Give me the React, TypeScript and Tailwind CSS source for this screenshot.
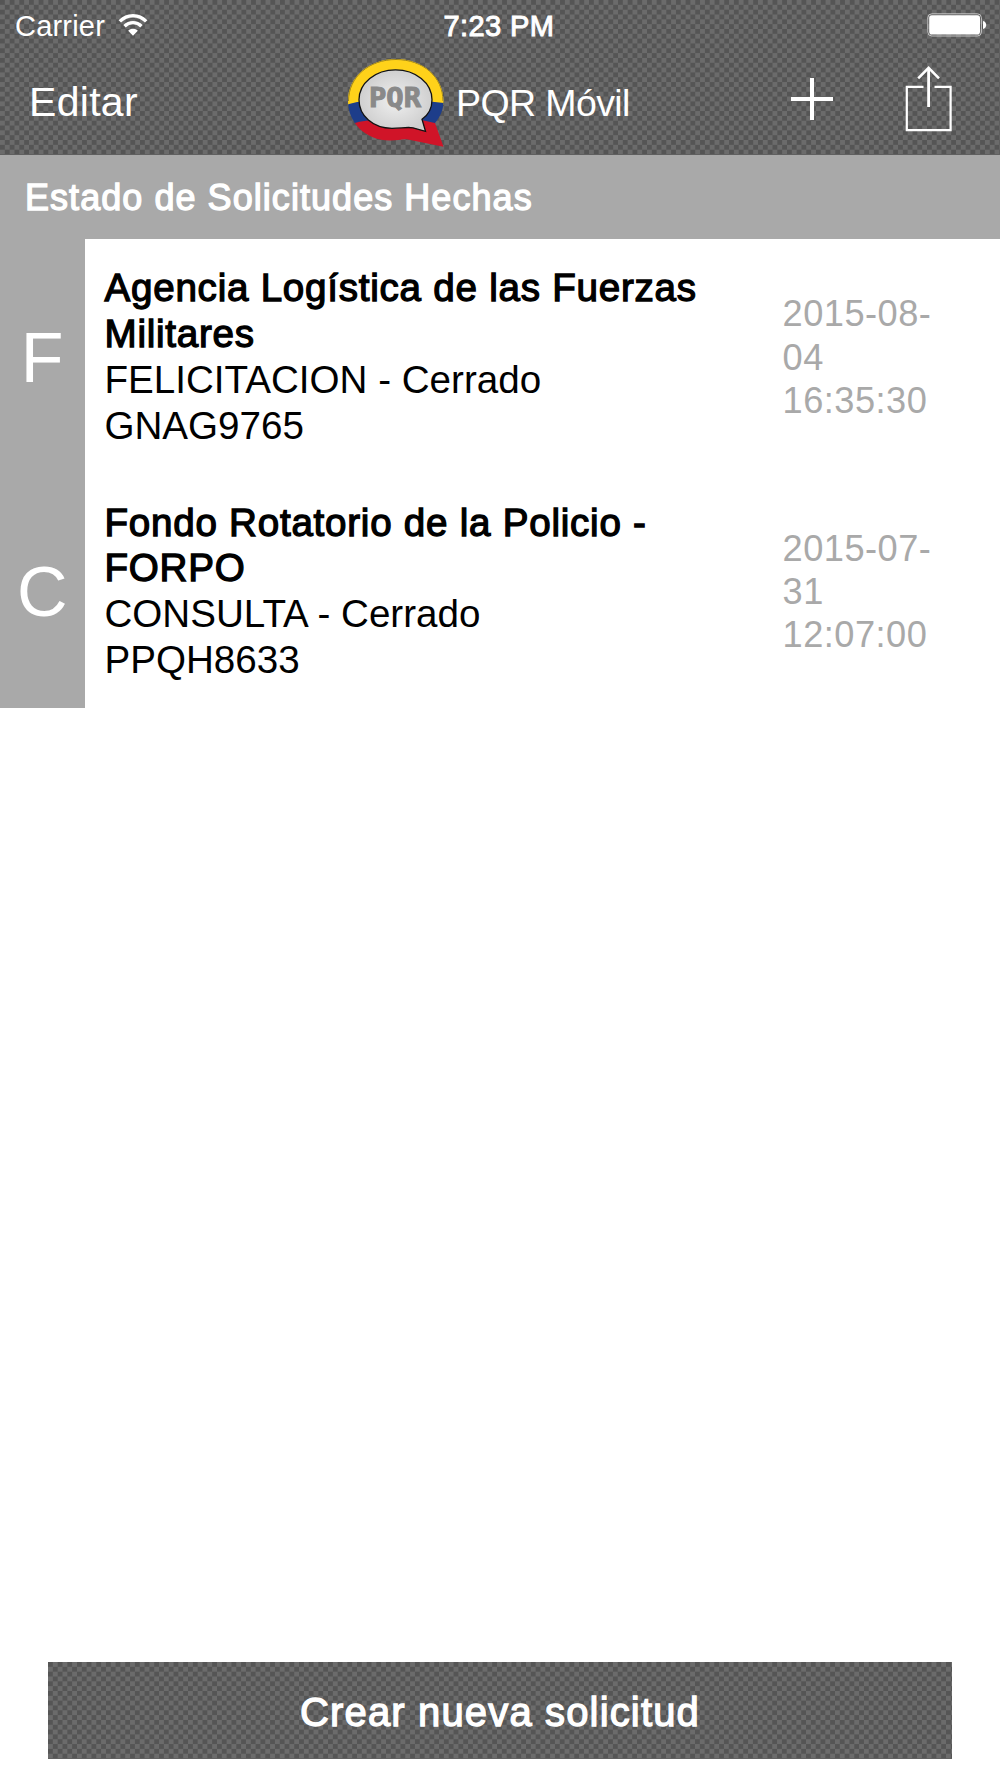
import { useState } from 'react';

type Solicitud = { id: string; entity: string; kind: string; status: string; date: string };

const solicitudes: Solicitud[] = [
  { id: 'GNAG9765', entity: 'Agencia Logística de las Fuerzas Militares', kind: 'FELICITACION', status: 'Cerrado', date: '2015-08-04 16:35:30' },
  { id: 'PPQH8633', entity: 'Fondo Rotatorio de la Policio - FORPO', kind: 'CONSULTA', status: 'Cerrado', date: '2015-07-31 12:07:00' },
];

const textureCls = 'bg-[repeating-conic-gradient(#6b6b6b_0_25%,#555555_0_50%)] bg-[length:9.66px_9.66px]';
// medium weight: regular face thickened with a stroke
const mediumCls = '[-webkit-text-stroke:1.3px_currentColor]';

function WifiIcon() {
  return (
    <svg className="h-[23px] w-[30px]" viewBox="0 0 30 23" fill="none" stroke="#fff">
      <path d="M1.8 7.4C9.2-.1 20.8-.1 28.2 7.4" strokeWidth="3.4" />
      <path d="M6.5 12.2c4.8-4.8 12.2-4.8 17 0" strokeWidth="3.4" />
      <path d="M15 21.8l-4.8-5.1c2.7-2.5 6.9-2.5 9.6 0z" fill="#fff" stroke="none" />
    </svg>
  );
}

function BatteryIcon() {
  return (
    <svg className="h-[24px] w-[60px]" viewBox="0 0 60 24">
      <rect x=".8" y=".8" width="53.6" height="22.2" rx="4" fill="none" stroke="#c4c4c4" strokeWidth="1" />
      <rect x="2.2" y="2.2" width="50.8" height="19.4" rx="2.8" fill="#fff" />
      <path d="M56 8c4.3.8 4.3 7.2 0 8z" fill="#fff" />
    </svg>
  );
}

function Logo() {
  return (
    <svg className="h-[90px] w-[98px]" viewBox="0 0 98 90">
      <defs>
        <clipPath id="bubble">
          <path d="M49 0C22 0 1 18 1 42c0 21 17 39.500 42 39.500 8 0 13-2 18-1l35.500 7.200L88 64c5-6 8.500-13 8.500-22C96.500 18 76 0 49 0z" />
        </clipPath>
        <radialGradient id="silver">
          <stop offset="0" stopColor="#f0f0f0" />
          <stop offset="1" stopColor="#cfcfcf" />
        </radialGradient>
      </defs>
      <g clipPath="url(#bubble)">
        <rect width="98" height="46" fill="#ffd21a" />
        <path d="M0 45.500q12-4 24-3h50q12 0 24 1.500V65H0z" fill="#1d3d8a" />
        <path d="M0 66q12-4 24-5h50q10 2 24 5v24H0z" fill="#d01428" />
        <path d="M1.500 42C1.500 18 22 .5 49 .5S96 18 96 42" fill="none" stroke="#9a811c" />
      </g>
      <path d="M48.500 10.800c-20 0-36.500 13-36.500 30 0 16 14 28.500 33 28.500 9 0 15-1.500 21-.5l12.500 3.500-3.500-12c6.500-4.500 10-11.500 10-19.500 0-17-16.500-30-36.500-30z" fill="url(#silver)" stroke="#111" strokeWidth="1.300" />
      <text x="22" y="47.500" textLength="52" lengthAdjust="spacingAndGlyphs" className="font-['DejaVu_Sans_Mono',monospace] text-[27px] font-bold" fill="#898989" stroke="#898989" strokeWidth="1">PQR</text>
    </svg>
  );
}

function ShareIcon() {
  return (
    <svg className="h-[66px] w-[48px]" viewBox="0 0 48 66" fill="none" stroke="#fff" strokeWidth="2.200">
      <path d="M18.500 20.800H1.800v43.400h43.800V20.800H29.500" />
      <path d="M23.600 41V2" strokeWidth="2.800" />
      <path d="M13.200 12.300L23.600 1.900l10.400 10.400" strokeWidth="2.600" />
    </svg>
  );
}

function SolicitudRow({ item }: { item: Solicitud }) {
  return (
    <li className="flex h-[234.500px] items-stretch">
      <div className="flex w-[84.500px] shrink-0 items-center justify-center bg-[#a9a9a9] text-[70px] leading-none text-white">
        <span className="pt-[3px]">{item.kind[0]}</span>
      </div>
      <div className="w-[678px] pl-5 pt-[26px] text-[38.600px] leading-[45.900px]">
        <p className={`w-[610px] tracking-[0.75px] ${mediumCls}`}>{item.entity}</p>
        <p>{item.kind} - {item.status}</p>
        <p>{item.id}</p>
      </div>
      <p className="w-[175px] self-center pl-5 pt-0.5 text-[36.200px] leading-[43.200px] tracking-[0.5px] text-[#a9a9a9]">{item.date}</p>
    </li>
  );
}

export default function App() {
  const [items] = useState(solicitudes);

  return (
    <div className="flex h-[1778px] w-[1000px] flex-col bg-white font-['Liberation_Sans',Arial,sans-serif] text-black">
      <header className={`h-[155px] shrink-0 text-white ${textureCls}`}>
        <div className="grid h-[50px] grid-cols-3 items-center pl-[15px] pr-[13px] text-[29px]">
          <div className="flex items-center gap-[13px]"><span className="pt-[3px] tracking-[0.2px]">Carrier</span><WifiIcon /></div>
          <span className="pr-1 pt-[3px] text-center tracking-[0.4px] [-webkit-text-stroke:1px_currentColor]">7:23 PM</span>
          <div className="flex justify-end"><BatteryIcon /></div>
        </div>
        <nav className="flex h-[105px] items-start">
          <button className="ml-[29px] mt-[29px] w-[318px] text-left text-[41px] leading-[46px] tracking-[0.3px]">Editar</button>
          <div className="mt-[9px]"><Logo /></div>
          <h1 className="ml-[11px] mt-[30px] w-[335px] text-[37.500px] leading-[46px] tracking-[-0.600px]">PQR Móvil</h1>
          <button aria-label="Nueva solicitud" className="mt-[28px]">
            <svg className="h-[42px] w-[42px]" viewBox="0 0 42 42" stroke="#fff" strokeWidth="4"><path d="M0 21h42M21 0v42" /></svg>
          </button>
          <button aria-label="Compartir" className="ml-[72px] mt-[16px]"><ShareIcon /></button>
        </nav>
      </header>
      <h2 className={`h-[84px] shrink-0 bg-[#a9a9a9] pl-[25px] pt-[21px] text-[36px] leading-[44px] tracking-[1.05px] text-white ${mediumCls}`}>Estado de Solicitudes Hechas</h2>
      <ul className="grow">
        {items.map((item) => <SolicitudRow key={item.id} item={item} />)}
      </ul>
      <footer className="px-12 pb-[19px]">
        <button className={`block h-[97px] w-[904px] pt-0.5 text-[40px] tracking-[1.15px] text-white ${mediumCls} ${textureCls}`}>Crear nueva solicitud</button>
      </footer>
    </div>
  );
}
